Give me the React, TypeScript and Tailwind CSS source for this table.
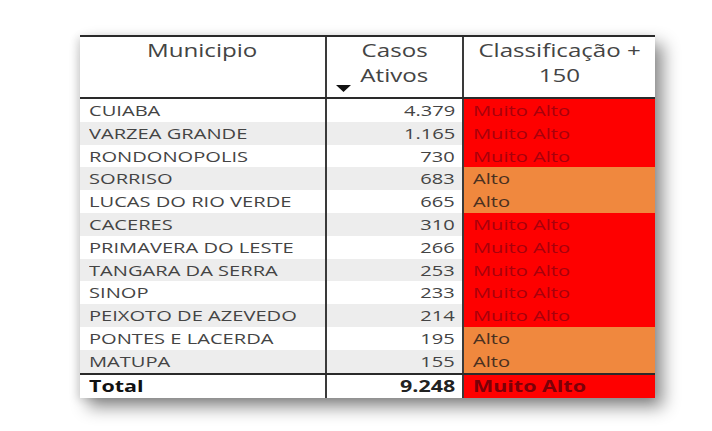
import React from "react";

interface Row {
  municipio: string;
  casos: string;
  nivel: "Muito Alto" | "Alto";
}

const rows: Row[] = [
  { municipio: "CUIABA", casos: "4.379", nivel: "Muito Alto" },
  { municipio: "VARZEA GRANDE", casos: "1.165", nivel: "Muito Alto" },
  { municipio: "RONDONOPOLIS", casos: "730", nivel: "Muito Alto" },
  { municipio: "SORRISO", casos: "683", nivel: "Alto" },
  { municipio: "LUCAS DO RIO VERDE", casos: "665", nivel: "Alto" },
  { municipio: "CACERES", casos: "310", nivel: "Muito Alto" },
  { municipio: "PRIMAVERA DO LESTE", casos: "266", nivel: "Muito Alto" },
  { municipio: "TANGARA DA SERRA", casos: "253", nivel: "Muito Alto" },
  { municipio: "SINOP", casos: "233", nivel: "Muito Alto" },
  { municipio: "PEIXOTO DE AZEVEDO", casos: "214", nivel: "Muito Alto" },
  { municipio: "PONTES E LACERDA", casos: "195", nivel: "Alto" },
  { municipio: "MATUPA", casos: "155", nivel: "Alto" },
];

// the report font is a wide one, so the text is stretched sideways
const Wide: React.FC<{ from: "left" | "right" | "center"; children: React.ReactNode }> = ({ from, children }) => {
  const origin = from === "left" ? "origin-left" : from === "right" ? "origin-right" : "origin-center";
  return <span className={`inline-block whitespace-nowrap scale-x-[1.34] ${origin}`}>{children}</span>;
};

const App: React.FC = () => {
  return (
    <div className="w-[712px] h-[431px] bg-white pt-[35px] pl-[80px] font-['Open_Sans','Liberation_Sans',sans-serif]">
      <div className="w-[575px] bg-white shadow-[8px_9px_16px_rgba(0,0,0,0.45),-3px_2px_8px_rgba(0,0,0,0.12)]">
        {/* header */}
        <div className="grid grid-cols-[247px_137px_191px] h-[64px] border-t-2 border-b-2 border-[#2a2a2a] text-[18px] leading-[25px] text-[#444]">
          <div className="border-r-2 border-[#3a3a3a] text-center pt-[1px]">
            <Wide from="center">Municipio</Wide>
          </div>
          <div className="relative border-r-2 border-[#3a3a3a] flex flex-col items-center pt-[1px]">
            <Wide from="center">Casos</Wide>
            <Wide from="center">Ativos</Wide>
            <svg className="absolute left-[9px] bottom-[5px]" width="15" height="7" viewBox="0 0 15 7">
              <path d="M0 0 L15 0 L7.5 7 Z" fill="#111" />
            </svg>
          </div>
          <div className="flex flex-col items-center pt-[1px]">
            <Wide from="center">Classificação +</Wide>
            <Wide from="center">150</Wide>
          </div>
        </div>
        {/* body */}
        {rows.map((r, i) => (
          <div
            key={r.municipio}
            className={`grid grid-cols-[247px_137px_191px] h-[22.8px] text-[15px] leading-[22.8px] ${
              i % 2 === 1 ? "bg-[#ededed]" : "bg-white"
            }`}
          >
            <div className="border-r-2 border-[#3a3a3a] pl-[9px] text-[#444]">
              <Wide from="left">{r.municipio}</Wide>
            </div>
            <div className="border-r-2 border-[#3a3a3a] pr-[7px] text-right text-[#444]">
              <Wide from="right">{r.casos}</Wide>
            </div>
            <div
              className={`pl-[9px] ${
                r.nivel === "Alto" ? "bg-[#f0883e] text-[#4a3020]" : "bg-[#fe0000] text-[#a8000c]"
              }`}
            >
              <Wide from="left">{r.nivel}</Wide>
            </div>
          </div>
        ))}
        {/* total */}
        <div className="grid grid-cols-[247px_137px_191px] h-[25px] border-t-2 border-[#2a2a2a] text-[16px] leading-[23px] font-bold">
          <div className="border-r-2 border-[#3a3a3a] pl-[9px] text-[#111]">
            <Wide from="left">Total</Wide>
          </div>
          <div className="border-r-2 border-[#3a3a3a] pr-[7px] text-right text-[#222]">
            <Wide from="right">9.248</Wide>
          </div>
          <div className="pl-[9px] bg-[#fe0000] text-[#7a0008]">
            <Wide from="left">Muito Alto</Wide>
          </div>
        </div>
      </div>
    </div>
  );
};

export default App;
